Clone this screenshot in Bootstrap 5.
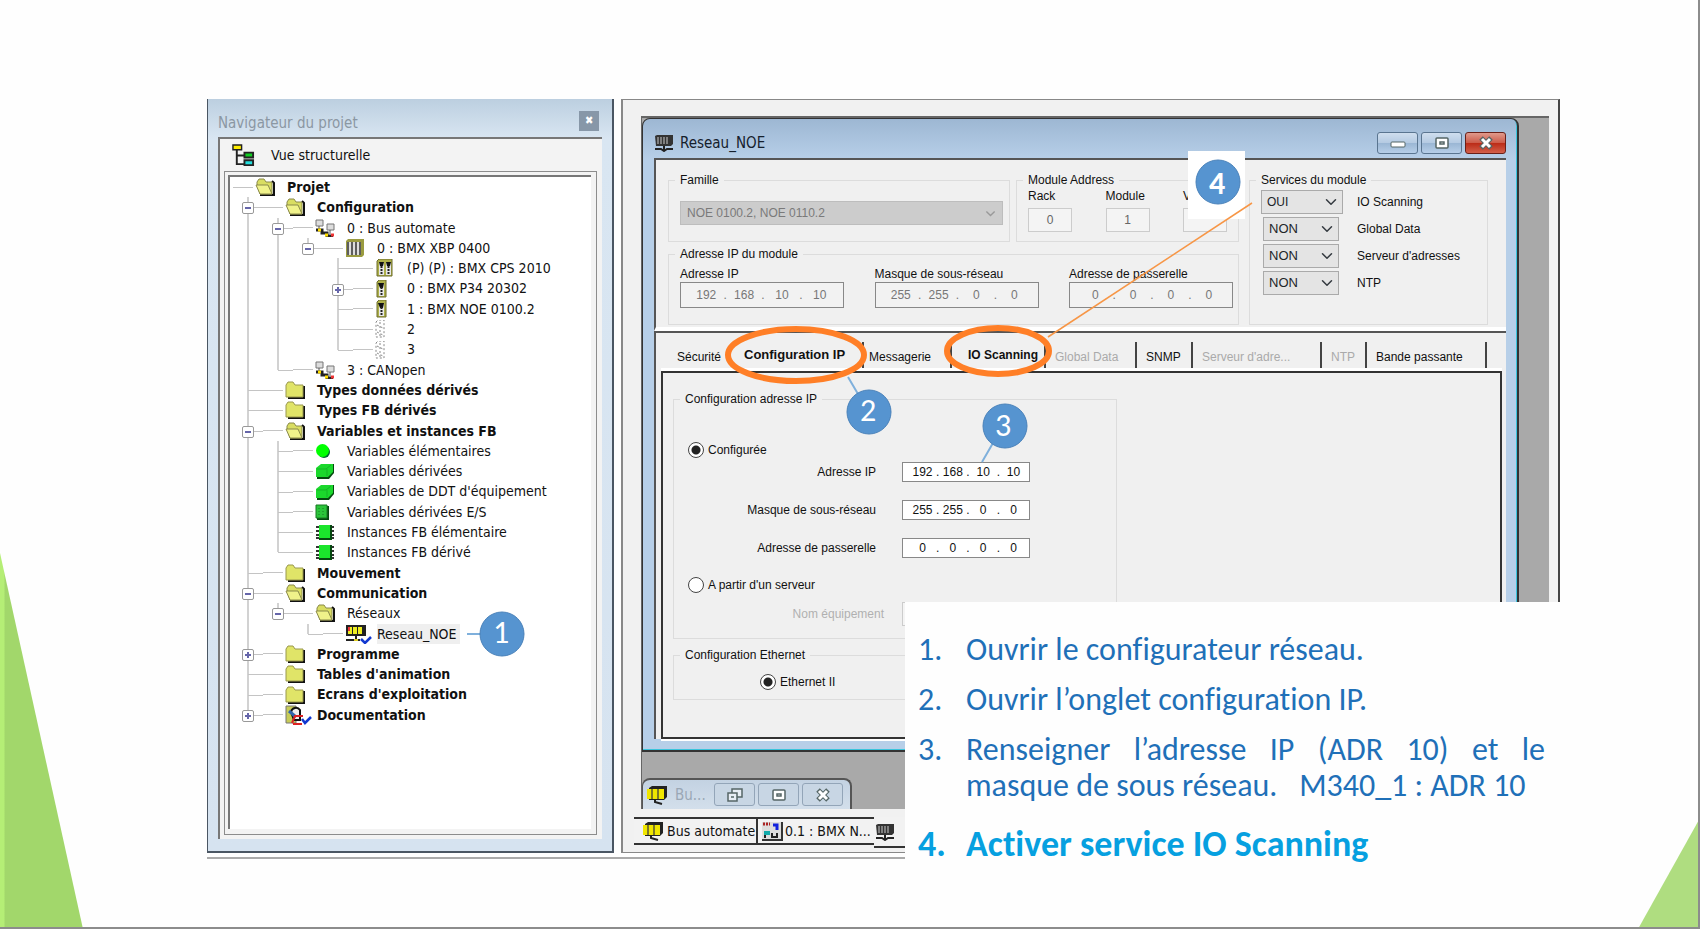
<!DOCTYPE html>
<html lang="fr">
<head>
<meta charset="utf-8">
<meta name="viewport" content="width=device-width, initial-scale=1">
<title>Configuration réseau</title>
<link href="https://cdn.jsdelivr.net/npm/bootstrap@5.3.0/dist/css/bootstrap.min.css" rel="stylesheet">
<style>
body{background:#fff;color:#111;font:12px/16px "Liberation Sans",Arial,sans-serif}
button{font:inherit;color:inherit}
a{color:inherit;text-decoration:none}
.slide{background:#fefefe}
.slide::after{content:"";position:absolute;inset:0;border:solid #8c8c8c;border-width:0 2px 2px 0;pointer-events:none}
.tri-l{left:0;bottom:0;width:83px;height:376px;background:linear-gradient(90deg,#b5ee76 4px,#a2d76b 5px);clip-path:polygon(0 0,100% 100%,0 100%)}
.tri-r{right:0;bottom:0;width:62px;height:111px;background:#afdd80;clip-path:polygon(100% 0,100% 100%,0 100%)}
.shot{padding:99px 140px 60px 207px}
.panels{border-bottom:2px solid #aaa;padding-bottom:4px;gap:7px}

/* project browser */
.nav-panel{width:407px;border:solid #4a5663;border-width:0 2px 2px 1px;background:linear-gradient(#bccfe0,#d9e6f2 40px,#d6e3f0);padding:0 10px 12px 10px;font-family:"DejaVu Sans Condensed","DejaVu Sans",sans-serif;font-size:14px}
.nav-title{height:38px;color:#8b97a3;font-size:15px;padding-top:8px}
.nav-x{width:20px;height:20px;background:#8797a8;color:#fff;border:0;font-size:11px;line-height:18px;margin-right:3px}
.view-box{background:#f3f3f3;border:solid #777;border-width:2px 0 0 2px;padding:0 5px 4px 4px}
.view-head{height:32px;padding-left:8px;gap:16px}
.tree-out{border:1px solid #8c8c8c;padding:3px 5px 5px 3px}
.tree{background:#fff;border:solid #777;border-width:2px 0 0 2px;padding:0 0 104px 3px;margin:0;list-style:none}
.tree-rows{display:grid;grid-auto-rows:1fr;height:548px;margin:0;padding:0;list-style:none;line-height:20px;white-space:nowrap}
.tree-rows li{display:flex;align-items:stretch}
.cn{width:30px;position:relative;flex:none}
.cn::before{content:"";position:absolute;left:14px;top:0;bottom:0;border-left:2px solid #d2d2d2}
.cn.no::before{display:none}
.cn.end::before{bottom:50%}
.cn.t::after,.cn.end::after{content:"";position:absolute;left:15px;right:0;top:50%;border-top:1px solid #c4c4c4}
.dash{width:20px;flex:none;display:flex;align-items:center}
.dash::after{content:"";width:100%;border-top:1px solid #c4c4c4}
.ex{position:absolute;z-index:1;left:9px;top:50%;margin-top:-5px;width:12px;height:12px;background:#fff;border:1px solid #999;border-radius:2px}
.ex::before{content:"";position:absolute;left:2px;right:2px;top:4px;border-top:2px solid #66a}
.ex.plus::after{content:"";position:absolute;top:2px;bottom:2px;left:4px;border-left:2px solid #66a}
.ico{width:34px;flex:none;padding-left:2px;display:flex;align-items:center}
.sel{background:#efefef;padding-right:4px}

/* workspace */
.work{border:solid #888;border-width:1px 2px 1px 2px;border-right-color:#444;background:#f1f1f1;padding:16px 0 4px 18px;min-width:0}
.mdi{background:#a9a9a9;border:solid #666;border-width:2px 0 0 1px;margin-right:9px}
.win{margin-right:30px;border:1px solid #333;border-width:1px 2px 2px 1px;border-radius:8px 8px 0 0;background:linear-gradient(#9db7d3,#b7cfe8 40px);box-shadow:inset -1px -1px #3ac4dc;padding:0 11px 11px 11px}
.win-title{height:39px;padding-top:8px;font:15px/20px "DejaVu Sans Condensed",sans-serif;color:#15202c;gap:3px}
.win-title span{padding-left:3px}
.wbtn{width:41px;height:22px;border:1px solid #5a7590;border-radius:3px;background:linear-gradient(#cfdeee,#b4cae2 50%,#9ab6d4 51%,#b7cfe8);padding:0;display:flex;align-items:center;justify-content:center}
.wbtn.red{background:linear-gradient(#e09a8c,#cc5a48 50%,#bb2b17 51%,#d3604a);border-color:#6a2018}
.pane{background:#f0f0f0;border:solid #555;border-width:2px 0 0 2px}
.pane-a{padding:12px 18px 2px 12px;border-bottom:4px solid #fff;gap:10px}
fieldset{border:1px solid #dcdcdc;padding:0 11px;min-width:0}
legend{float:none;width:auto;margin:0 0 0 -5px;padding:0 5px;font-size:12px;line-height:16px;height:16px}
.fs-row{height:70px;gap:6px}
.grp-addr{width:223px}
.grp-svc{width:239px}
.chev-off{--bs-form-select-bg-img:url("data:image/svg+xml,%3csvg xmlns='http://www.w3.org/2000/svg' viewBox='0 0 16 16'%3e%3cpath fill='none' stroke='%23999' stroke-width='2' d='m2 5 6 6 6-6'/%3e%3c/svg%3e")}
.sel-fam{height:24px;margin-top:13px;padding:0 6px;font-size:12px;line-height:20px;border-radius:0;border-color:#bdbdbd;background-color:#ccc!important;color:#7a7a7a;background-position:right 6px center;background-size:11px}
.grp-fam{padding-right:6px}
.mini{width:44px;height:24px;border:1px solid #ccc;background:#f4f4f4;text-align:center;color:#666;font-size:12px;padding:0;border-radius:0}
select.mini{background-color:#f4f4f4!important;background-position:center bottom;background-size:12px;color:transparent}
.ipbox{width:164px;height:26px;border:1px solid #888;background:#f2f2f2;color:#777;padding:0 6px 0 8px}
.ipbox input{flex:1 1 0;min-width:0;border:0;background:none;text-align:center;padding:0;color:inherit;font-size:12px}
.ipbox.sm{width:128px;height:20px;background:#fff;color:#111;padding:0 2px 0 6px}
.ip-row{margin-right:-6px}
.svc{display:grid;grid-template-columns:96px auto;grid-auto-rows:24px;row-gap:3px;align-items:center;margin-top:2px}
.svc select{width:76px;height:24px;margin-left:2px;padding:0 5px;font-size:13px;line-height:20px;border-radius:0;border-color:#aaa;background-color:#e4e4e4;background-position:right 5px center;background-size:12px}
.svc select.wide{width:82px;margin-left:0;font-size:12px}
.pane-b{padding:9px 4px 0 5px}
.tabs{margin:0 13px 0 7px;height:29px}
.tab{border:0;background:none;padding:3px 0 0 9px;text-align:left;height:26px;font-size:12px;border-right:2px solid #444;white-space:nowrap;flex:none}
.tab:disabled{color:#aaa}
.tab.on{font-size:13px;font-weight:700;padding:0 0 0 8px}
.tab.hot{font-weight:700;padding:0 0 0 16px}
.tab.near{padding-left:5px}
.tab-page{border:solid #333;border-width:2px;box-shadow:0 -3px #fff,0 2px #fff;padding:18px 0 37px 10px}
.cfg{width:444px;padding-left:11px}
.f-row{display:grid;grid-template-columns:191px 128px;column-gap:26px;align-items:center;text-align:right;height:20px;margin-top:18px}
.opt{display:flex;align-items:center;gap:4px;height:18px;margin:18px 0 0 3px}
.opt.first{margin-top:34px}
.opt.first + .f-row{margin-top:3px}
.opt.eth{margin:10px 0 8px 75px}
.opt .form-check-input{width:16px;height:16px;margin:0;border:1px solid #444;background-color:#fff;box-shadow:none}
.opt .form-check-input:checked{background-image:radial-gradient(circle,#222 4px,transparent 5px);background-color:#fff}
.f-row.off{color:#b0b0b0;margin:8px 0 16px}
.f-row.off label{margin-right:-8px}
.task-win{width:210px;height:31px;margin-top:26px;border:1px solid #555;border-width:2px 2px 0 1px;border-radius:8px 8px 0 0;background:linear-gradient(#c3d2e2,#d3dfeb);padding:0 7px 0 3px;color:#9aa7b5;font:15px/20px "DejaVu Sans Condensed",sans-serif;gap:3px}
.task-win .wbtn{border-color:#93a5b8;background:#c8d6e4;height:23px}
.task-tabs{margin:8px 0 0 -7px;font:14px/20px "DejaVu Sans Condensed",sans-serif}
.task{border:solid #333;border-width:2px 2px 2px 0;background:#f2f2f2;height:28px;padding:0 1px 0 1px;display:flex;align-items:center;gap:4px;white-space:nowrap}
.task svg{flex:none}
.t-bus{width:124px;padding-left:8px;gap:3px}
.t-bmx{width:116px;padding-left:3px;gap:2px}
.t-net{width:60px;height:31px}

/* instructions and callouts */
.steps{left:905px;right:140px;top:602px;background:#fefefe;padding:30px 15px 14px 13px;font:32px/36px Carlito,Lato,sans-serif;font-variant-ligatures:none;color:#1f70b8}
.steps ol{list-style:none;margin:0;padding:0}
.steps li{display:grid;grid-template-columns:48px 1fr;margin-bottom:14px}
.steps li:last-child{color:#06a0e0;font-weight:700;font-size:36px;margin:22px 0 0}
.just{text-align:justify;text-align-last:justify}
.marks{left:0;top:0;pointer-events:none}
.marks text{font:32px Carlito,Lato,sans-serif;fill:#fff;text-anchor:middle}
.marks .strong{font-weight:700}
</style>
</head>
<body>
<svg width="0" height="0" class="position-absolute">
<defs>
<symbol id="fo" viewBox="0 0 20 18"><path d="M5 17h14V5l-2-2" fill="none" stroke="#111" stroke-width="2"/><path d="M2 6V4l2-3h5l2 3h6v12H5z" fill="#d9dd62" stroke="#8a8a4a"/><path d="M1 7h12l4 9H5z" fill="#f0f28a" stroke="#8a8a4a"/></symbol>
<symbol id="fc" viewBox="0 0 20 18"><path d="M3 17h16V5" fill="none" stroke="#111" stroke-width="2"/><path d="M1 16V4l2-3h5l2 3h8v12z" fill="#e0e468" stroke="#99984f"/></symbol>
<symbol id="bus" viewBox="0 0 20 18"><path d="M1 1h7v6H1zM12 5h7v6h-7z" fill="#ddd" stroke="#777"/><path d="M4 7v4M15 11v4" stroke="#555"/><path d="M1 11h6v3h5v3h6" fill="none" stroke="#222" stroke-width="3"/><path d="M3 11h3M10 16h3" stroke="#fd0" stroke-width="3"/><path d="M16 16h3" stroke="#e33" stroke-width="3"/></symbol>
<symbol id="rack" viewBox="0 0 20 18"><path d="M1 2l2-2h16v16l-2 2H1z" fill="#9a9b40"/><path d="M2 3h14v13H2z" fill="#ddd"/><path d="M3 3v13M7 3v13M11 3v13M15 3v13" stroke="#333" stroke-width="1.500"/></symbol>
<symbol id="m2" viewBox="0 0 20 18"><path d="M2 2l2-2h13v17H2z" fill="#aeb04a" stroke="#6c6d2c"/><path d="M4 4h5v12H4zM11 4h5v12h-5z" fill="#e8e8e8"/><path d="M4 3h5l-1 4H5zM11 3h5l-1 4h-3z" fill="#111"/><path d="M6.500 7v9M13.500 7v9" stroke="#222" stroke-width="2" stroke-dasharray="2 1"/></symbol>
<symbol id="m1" viewBox="0 0 20 18"><path d="M2 2l2-2h7v17H2z" fill="#aeb04a" stroke="#6c6d2c"/><path d="M4 4h5v12H4z" fill="#e8e8e8"/><path d="M3 3h6l-1 5H5z" fill="#111"/><path d="M6.500 7v9" stroke="#222" stroke-width="2" stroke-dasharray="2 1"/></symbol>
<symbol id="m0" viewBox="0 0 20 18"><path d="M1 2l2-2h6v17H1zM5 2v15M2 5l6 3M2 12l6 3" fill="none" stroke="#888" stroke-dasharray="2 2"/></symbol>
<symbol id="dot" viewBox="0 0 20 18"><circle cx="9" cy="10" r="6" fill="#063"/><circle cx="7.500" cy="8.500" r="6.500" fill="#0f0"/></symbol>
<symbol id="cube" viewBox="0 0 20 18"><path d="M2 7l5-5h12v9l-5 6H2z" fill="#064a10"/><path d="M1 6l5-4h12v8l-5 5H1z" fill="#1bd82c"/><path d="M2 7h9l5-4M12 7v7" stroke="#15b525" fill="none"/></symbol>
<symbol id="es" viewBox="0 0 20 18"><path d="M2 3h12v14H2z" fill="#064a10"/><path d="M1 2h11v13H1z" fill="#2bc53a" stroke="#187a22"/><path d="M4 5v8M8 5v8" stroke="#187a22" stroke-dasharray="1 2"/></symbol>
<symbol id="fb" viewBox="0 0 20 18"><path d="M1 4h18M1 8h18M1 12h18M1 15h18" stroke="#333" stroke-width="2"/><path d="M4 2h13v15H4z" fill="#064a10"/><path d="M4 2h11v13H4z" fill="#1be52c"/></symbol>
<symbol id="netc" viewBox="0 0 28 20"><path d="M1 1h20v11H1z" fill="#222"/><path d="M3 3h4v7H3zM8 3h4v7H8zM13 3h4v7h-4z" fill="#ee2"/><path d="M3 3h2v4H3z" fill="#e33"/><path d="M11 11v5M1 16h14" stroke="#222" stroke-width="2"/><path d="M9 16h4" stroke="#dc2" stroke-width="2"/><path d="M16 15l4 4 6-6" fill="none" stroke="#1238d0" stroke-width="2.500"/></symbol>
<symbol id="doc" viewBox="0 0 28 20"><path d="M1 1h10v17H1z" fill="#c8cc58" stroke="#777"/><path d="M6 7a5 5 0 0 1 9-2v10H9z" fill="#eee" stroke="#111" stroke-width="2"/><path d="M4 6l7 6" stroke="#36a" stroke-width="3"/><path d="M7 18l3-7h8M8 19h9" stroke="#d22" stroke-width="2" fill="none"/><path d="M17 14l3 4 6-6" fill="none" stroke="#1238d0" stroke-width="2.500"/></symbol>
<symbol id="vue" viewBox="0 0 24 24"><path d="M5 5v16h9M5 12h9" fill="none" stroke="#222" stroke-width="2"/><path d="M1 1h9v5H1z" fill="#fe0" stroke="#222" stroke-width="1.500"/><path d="M13 9h9v5h-9z" fill="#1c2" stroke="#222" stroke-width="2"/><path d="M13 17h9v5h-9z" fill="#2dd" stroke="#222" stroke-width="2"/></symbol>
<symbol id="net" viewBox="0 0 20 18"><path d="M1 2l2-1h16v9l-2 2H2z" fill="#333"/><path d="M4 3v7M7 3v7M10 3v7M13 3v7" stroke="#ccc" stroke-width="1"/><path d="M10 12v4M1 15h6l3 2 3-2h6" stroke="#222" stroke-width="2" fill="none"/></symbol>
<symbol id="ybus" viewBox="0 0 22 20"><path d="M3 3l3-2h15v11l-3 3H3z" fill="#222"/><path d="M1 4h17v10H1z" fill="#f0e600"/><path d="M6 4v10M12 4v10" stroke="#553" stroke-width="1.500"/><path d="M9 14v3l7 2" stroke="#222" stroke-width="2" fill="none"/></symbol>
<symbol id="cfgi" viewBox="0 0 22 20"><path d="M1 1h19v18H1z" fill="#ddd"/><path d="M21 1v18H1" stroke="#333" stroke-width="2" fill="none"/><path d="M2 3h7" stroke="#a22" stroke-width="3" stroke-dasharray="2 1"/><path d="M12 4h4v5" stroke="#12d" stroke-width="3" fill="none"/><path d="M3 10h6v4H3z" fill="#1aa"/><path d="M4 17v-3M11 12v4h5v-4" stroke="#222" stroke-width="2" fill="none"/></symbol>
<symbol id="gmax" viewBox="0 0 16 14"><rect x="2" y="2" width="12" height="10" rx="1" fill="#fff" stroke="#566" stroke-width="1.500"/><path d="M6 6h4v2H6z" fill="#fff" stroke="#566" stroke-width="1.500"/></symbol>
<symbol id="gx" viewBox="0 0 16 14"><path d="M3 2l10 10M13 2L3 12" stroke="#566" stroke-width="5"/><path d="M4 3l8 8M12 3l-8 8" stroke="#fff" stroke-width="3"/></symbol>
</defs>
</svg>

<main class="slide position-relative min-vh-100 overflow-hidden">
<div class="tri-l position-absolute"></div>
<div class="tri-r position-absolute"></div>
<div class="shot">
<div class="panels d-flex align-items-stretch">

<section class="nav-panel flex-shrink-0">
  <div class="nav-title d-flex justify-content-between align-items-start"><span class="pt-2">Navigateur du projet</span><button class="nav-x mt-1" aria-label="Fermer le navigateur">✖</button></div>
  <div class="view-box">
    <div class="view-head d-flex align-items-center"><svg width="23" height="23"><use href="#vue"/></svg><span>Vue structurelle</span></div>
    <div class="tree-out"><div class="tree">
    <ul class="tree-rows">
      <li><span class="dash"></span><span class="ico"><svg width="20" height="18"><use href="#fo"/></svg></span><b>Projet</b></li>
      <li><span class="cn t"><i class="ex"></i></span><span class="dash"></span><span class="ico"><svg width="20" height="18"><use href="#fo"/></svg></span><b>Configuration</b></li>
      <li><span class="cn"></span><span class="cn t"><i class="ex"></i></span><span class="dash"></span><span class="ico"><svg width="20" height="18"><use href="#bus"/></svg></span>0 : Bus automate</li>
      <li><span class="cn"></span><span class="cn"></span><span class="cn end"><i class="ex"></i></span><span class="dash"></span><span class="ico"><svg width="20" height="18"><use href="#rack"/></svg></span>0 : BMX XBP 0400</li>
      <li><span class="cn"></span><span class="cn"></span><span class="cn no"></span><span class="cn t"></span><span class="dash"></span><span class="ico"><svg width="20" height="18"><use href="#m2"/></svg></span>(P) (P) : BMX CPS 2010</li>
      <li><span class="cn"></span><span class="cn"></span><span class="cn no"></span><span class="cn t"><i class="ex plus"></i></span><span class="dash"></span><span class="ico"><svg width="20" height="18"><use href="#m1"/></svg></span>0 : BMX P34 20302</li>
      <li><span class="cn"></span><span class="cn"></span><span class="cn no"></span><span class="cn t"></span><span class="dash"></span><span class="ico"><svg width="20" height="18"><use href="#m1"/></svg></span>1 : BMX NOE 0100.2</li>
      <li><span class="cn"></span><span class="cn"></span><span class="cn no"></span><span class="cn t"></span><span class="dash"></span><span class="ico"><svg width="20" height="18"><use href="#m0"/></svg></span>2</li>
      <li><span class="cn"></span><span class="cn"></span><span class="cn no"></span><span class="cn end"></span><span class="dash"></span><span class="ico"><svg width="20" height="18"><use href="#m0"/></svg></span>3</li>
      <li><span class="cn"></span><span class="cn end"></span><span class="dash"></span><span class="ico"><svg width="20" height="18"><use href="#bus"/></svg></span>3 : CANopen</li>
      <li><span class="cn t"></span><span class="dash"></span><span class="ico"><svg width="20" height="18"><use href="#fc"/></svg></span><b>Types données dérivés</b></li>
      <li><span class="cn t"></span><span class="dash"></span><span class="ico"><svg width="20" height="18"><use href="#fc"/></svg></span><b>Types FB dérivés</b></li>
      <li><span class="cn t"><i class="ex"></i></span><span class="dash"></span><span class="ico"><svg width="20" height="18"><use href="#fo"/></svg></span><b>Variables et instances FB</b></li>
      <li><span class="cn"></span><span class="cn t"></span><span class="dash"></span><span class="ico"><svg width="20" height="18"><use href="#dot"/></svg></span>Variables élémentaires</li>
      <li><span class="cn"></span><span class="cn t"></span><span class="dash"></span><span class="ico"><svg width="20" height="18"><use href="#cube"/></svg></span>Variables dérivées</li>
      <li><span class="cn"></span><span class="cn t"></span><span class="dash"></span><span class="ico"><svg width="20" height="18"><use href="#cube"/></svg></span>Variables de DDT d'équipement</li>
      <li><span class="cn"></span><span class="cn t"></span><span class="dash"></span><span class="ico"><svg width="20" height="18"><use href="#es"/></svg></span>Variables dérivées E/S</li>
      <li><span class="cn"></span><span class="cn t"></span><span class="dash"></span><span class="ico"><svg width="20" height="18"><use href="#fb"/></svg></span>Instances FB élémentaire</li>
      <li><span class="cn"></span><span class="cn end"></span><span class="dash"></span><span class="ico"><svg width="20" height="18"><use href="#fb"/></svg></span>Instances FB dérivé</li>
      <li><span class="cn t"></span><span class="dash"></span><span class="ico"><svg width="20" height="18"><use href="#fc"/></svg></span><b>Mouvement</b></li>
      <li><span class="cn t"><i class="ex"></i></span><span class="dash"></span><span class="ico"><svg width="20" height="18"><use href="#fo"/></svg></span><b>Communication</b></li>
      <li><span class="cn"></span><span class="cn end"><i class="ex"></i></span><span class="dash"></span><span class="ico"><svg width="20" height="18"><use href="#fo"/></svg></span>Réseaux</li>
      <li><span class="cn"></span><span class="cn no"></span><span class="cn end"></span><span class="dash"></span><span class="ico"><svg width="28" height="20"><use href="#netc"/></svg></span><span class="sel">Reseau_NOE</span></li>
      <li><span class="cn t"><i class="ex plus"></i></span><span class="dash"></span><span class="ico"><svg width="20" height="18"><use href="#fc"/></svg></span><b>Programme</b></li>
      <li><span class="cn t"></span><span class="dash"></span><span class="ico"><svg width="20" height="18"><use href="#fc"/></svg></span><b>Tables d'animation</b></li>
      <li><span class="cn t"></span><span class="dash"></span><span class="ico"><svg width="20" height="18"><use href="#fc"/></svg></span><b>Ecrans d'exploitation</b></li>
      <li><span class="cn end"><i class="ex plus"></i></span><span class="dash"></span><span class="ico"><svg width="28" height="20"><use href="#doc"/></svg></span><b>Documentation</b></li>
    </ul>
    </div></div>
  </div>
</section>

<section class="work flex-fill">
  <div class="mdi">
    <div class="win">
      <div class="win-title d-flex align-items-center"><svg width="20" height="18"><use href="#net"/></svg><span class="me-auto">Reseau_NOE</span>
        <button class="wbtn" aria-label="Réduire"><svg width="16" height="14"><rect x="1" y="6" width="14" height="5" rx="1" fill="#fff" stroke="#566"/></svg></button>
        <button class="wbtn" aria-label="Agrandir"><svg width="16" height="14"><use href="#gmax"/></svg></button>
        <button class="wbtn red" aria-label="Fermer"><svg width="16" height="14"><use href="#gx"/></svg></button></div>
      <div class="pane pane-a d-flex">
        <div class="flex-fill">
          <div class="d-flex fs-row">
            <fieldset class="flex-fill grp-fam"><legend>Famille</legend><select class="form-select sel-fam chev-off" aria-label="Famille" disabled><option>NOE 0100.2, NOE 0110.2</option></select></fieldset>
            <fieldset class="grp-addr"><legend>Module Address</legend><div class="d-flex justify-content-between">
              <div><label class="d-block mb-1" for="rk">Rack</label><input class="mini" id="rk" value="0" disabled></div>
              <div><label class="d-block mb-1" for="md">Module</label><input class="mini" id="md" value="1" disabled></div>
              <div><label class="d-block mb-1" for="vo">Voie</label><select class="form-select mini chev-off" id="vo" disabled><option></option></select></div></div></fieldset>
          </div>
          <fieldset class="mt-1 pb-3"><legend>Adresse IP du module</legend><div class="ip-row d-flex gap-4 pt-1 justify-content-between">
            <div><label for="a1">Adresse IP</label><div class="ipbox d-flex align-items-center"><input id="a1" value="192" disabled>.<input aria-label="Octet 2" value="168" disabled>.<input aria-label="Octet 3" value="10" disabled>.<input aria-label="Octet 4" value="10" disabled></div></div>
            <div><label for="a2">Masque de sous-réseau</label><div class="ipbox d-flex align-items-center"><input id="a2" value="255" disabled>.<input aria-label="Octet 2" value="255" disabled>.<input aria-label="Octet 3" value="0" disabled>.<input aria-label="Octet 4" value="0" disabled></div></div>
            <div><label for="a3">Adresse de passerelle</label><div class="ipbox d-flex align-items-center"><input id="a3" value="0" disabled>.<input aria-label="Octet 2" value="0" disabled>.<input aria-label="Octet 3" value="0" disabled>.<input aria-label="Octet 4" value="0" disabled></div></div>
          </div></fieldset>
        </div>
        <fieldset class="grp-svc"><legend>Services du module</legend><div class="svc">
          <select class="form-select wide" id="s1"><option>OUI</option></select><label for="s1">IO Scanning</label>
          <select class="form-select" id="s2"><option>NON</option></select><label for="s2">Global Data</label>
          <select class="form-select" id="s3"><option>NON</option></select><label for="s3">Serveur d'adresses</label>
          <select class="form-select" id="s4"><option>NON</option></select><label for="s4">NTP</label></div></fieldset>
      </div>
      <div class="pane pane-b">
        <div class="tabs d-flex" role="tablist">
          <button class="tab border-0" role="tab" style="width:68px">Sécurité</button>
          <button class="tab on" role="tab" aria-selected="true" style="width:128px">Configuration IP</button>
          <button class="tab near" role="tab" style="width:88px">Messagerie</button>
          <button class="tab hot" role="tab" style="width:94px">IO Scanning</button>
          <button class="tab" role="tab" style="width:91px" disabled>Global Data</button>
          <button class="tab" role="tab" style="width:56px">SNMP</button>
          <button class="tab" role="tab" style="width:129px" disabled>Serveur d'adre...</button>
          <button class="tab" role="tab" style="width:45px" disabled>NTP</button>
          <button class="tab" role="tab" style="width:120px">Bande passante</button>
        </div>
        <div class="tab-page">
          <fieldset class="cfg"><legend>Configuration adresse IP</legend>
            <div class="opt first"><input class="form-check-input" type="radio" name="src" id="r1" checked><label for="r1">Configurée</label></div>
            <div class="f-row"><label for="b1">Adresse IP</label><div class="ipbox sm d-flex align-items-center"><input id="b1" value="192">.<input aria-label="Octet 2" value="168">.<input aria-label="Octet 3" value="10">.<input aria-label="Octet 4" value="10"></div></div>
            <div class="f-row"><label for="b2">Masque de sous-réseau</label><div class="ipbox sm d-flex align-items-center"><input id="b2" value="255">.<input aria-label="Octet 2" value="255">.<input aria-label="Octet 3" value="0">.<input aria-label="Octet 4" value="0"></div></div>
            <div class="f-row"><label for="b3">Adresse de passerelle</label><div class="ipbox sm d-flex align-items-center"><input id="b3" value="0">.<input aria-label="Octet 2" value="0">.<input aria-label="Octet 3" value="0">.<input aria-label="Octet 4" value="0"></div></div>
            <div class="opt"><input class="form-check-input" type="radio" name="src" id="r2"><label for="r2">A partir d'un serveur</label></div>
            <div class="f-row off"><label for="nm">Nom équipement</label><input id="nm" class="mini w-100" disabled></div>
          </fieldset>
          <fieldset class="cfg mt-2"><legend>Configuration Ethernet</legend>
            <div class="opt eth"><input class="form-check-input" type="radio" name="eth" id="r3" checked><label for="r3">Ethernet II</label></div></fieldset>
        </div>
      </div>
    </div>
    <div class="task-win d-flex align-items-center"><svg width="22" height="20"><use href="#ybus"/></svg><span class="me-auto ps-1">Bu...</span>
      <button class="wbtn" aria-label="Restaurer"><svg width="18" height="16"><g fill="#e8eef5" stroke="#566" stroke-width="1.500"><rect x="6" y="2" width="10" height="8"/><rect x="2" y="6" width="9" height="8"/><path d="M5 10h3"/></g></svg></button>
      <button class="wbtn" aria-label="Agrandir la fenêtre"><svg width="16" height="14"><use href="#gmax"/></svg></button>
      <button class="wbtn" aria-label="Fermer la fenêtre"><svg width="16" height="14"><use href="#gx"/></svg></button></div>
  </div>
  <div class="task-tabs d-flex">
    <a href="#" class="task t-bus"><svg width="22" height="20"><use href="#ybus"/></svg>Bus automate</a>
    <a href="#" class="task t-bmx border-end-0"><svg width="22" height="20"><use href="#cfgi"/></svg>0.1 : BMX N...</a>
    <a href="#" class="task t-net border-top-0" aria-label="Reseau_NOE"><svg width="20" height="18"><use href="#net"/></svg></a>
  </div>
</section>
</div>
</div>

<svg class="marks position-absolute" width="1560" height="700">
  <path d="M1188 151h57v68h-57z" fill="#fff"/>
  <path d="M1048 337L1252 203" stroke="#f79646" stroke-width="1.500"/>
  <path d="M467 634h14M848 377l10 17M982 462l11-19" stroke="#7fb0dc" stroke-width="2"/>
  <ellipse cx="796" cy="355" rx="68" ry="26" fill="none" stroke="#ff7f27" stroke-width="6"/>
  <ellipse cx="998" cy="351" rx="51" ry="23" fill="none" stroke="#ff7f27" stroke-width="6"/>
  <g fill="#5694d0" stroke="#4a82ba"><circle cx="502" cy="634" r="22"/><circle cx="869" cy="412" r="22"/><circle cx="1005" cy="426" r="22"/><circle cx="1218" cy="182" r="22"/></g>
  <text x="501" y="643">1</text><text x="868" y="421">2</text><text x="1003" y="436">3</text><text x="1217" y="194" class="strong">4</text>
</svg>

<section class="steps position-absolute">
  <ol>
    <li><span>1.</span><span>Ouvrir le configurateur réseau.</span></li>
    <li><span>2.</span><span>Ouvrir l’onglet configuration IP.</span></li>
    <li><span>3.</span><span><span class="just d-block">Renseigner l’adresse IP (ADR 10) et le</span>masque de sous réseau. &nbsp; M340_1 : ADR 10</span></li>
    <li><span>4.</span><span>Activer service IO Scanning</span></li>
  </ol>
</section>
</main>
<script src="https://cdn.jsdelivr.net/npm/bootstrap@5.3.0/dist/js/bootstrap.bundle.min.js"></script>
</body>
</html>
